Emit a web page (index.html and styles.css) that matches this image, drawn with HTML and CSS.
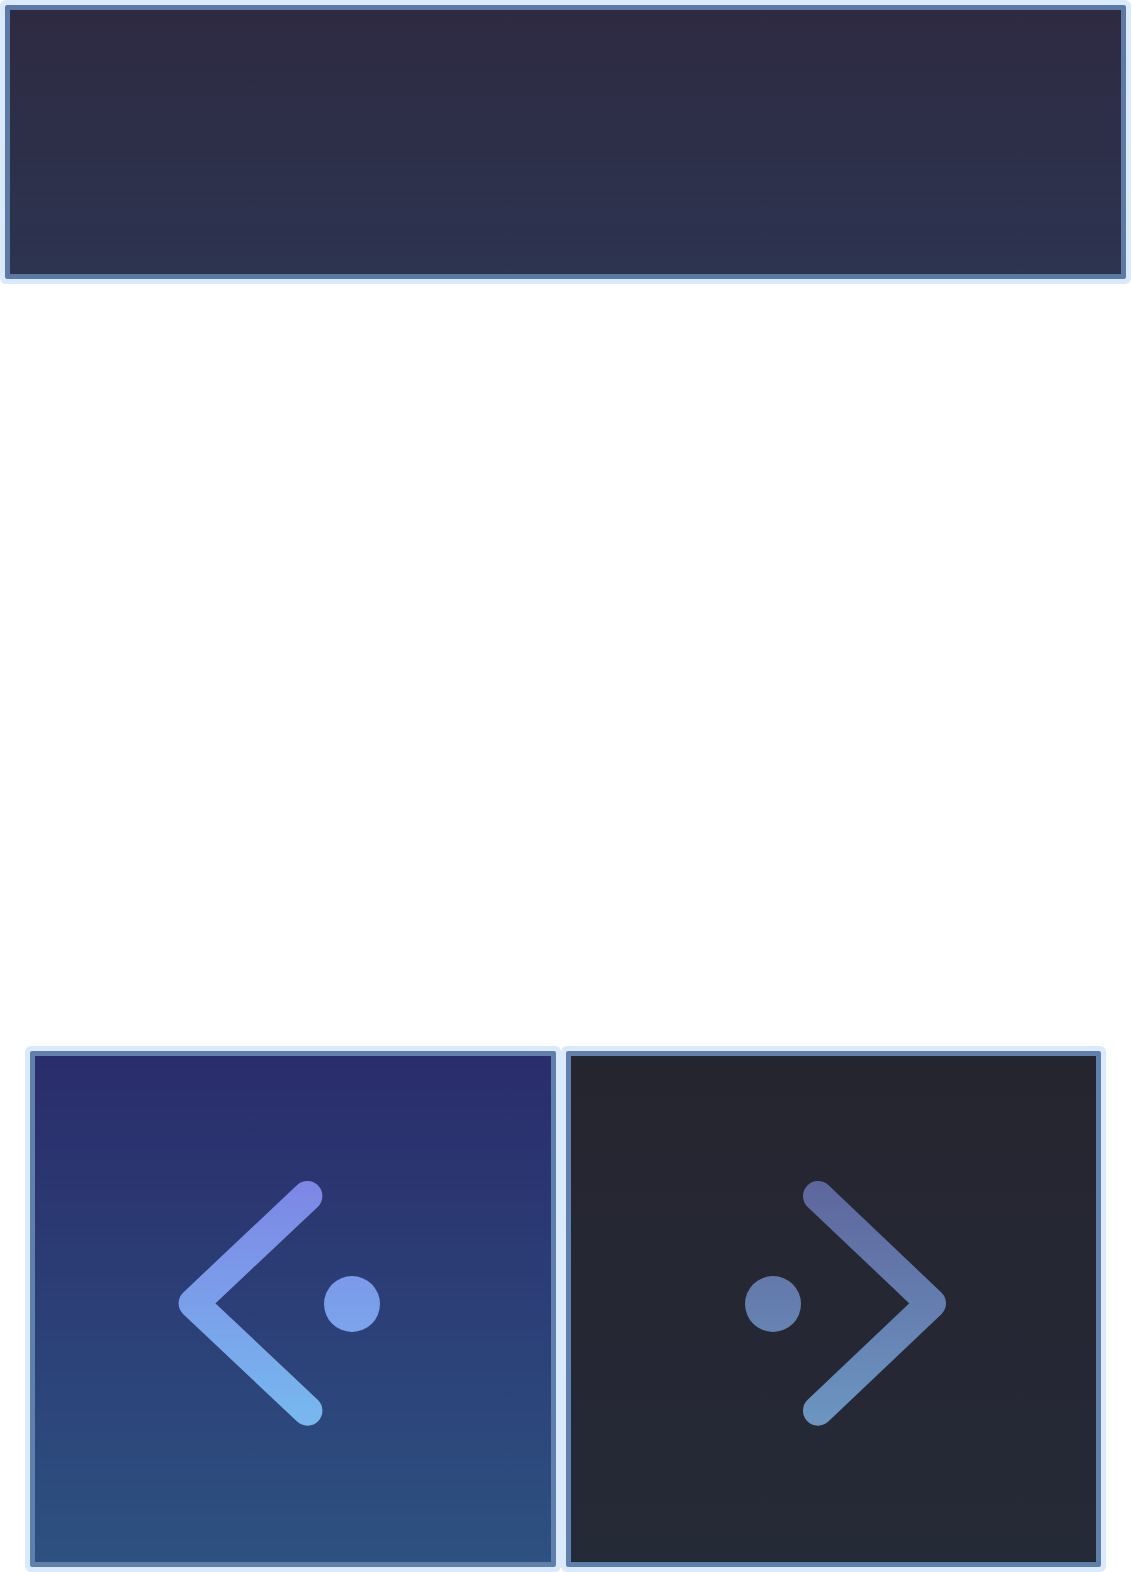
FILE: index.html
```html
<!DOCTYPE html>
<html lang="en">
<head>
<meta charset="utf-8">
<title>Carousel</title>
<link rel="stylesheet" href="styles.css">
</head>
<body>
<div class="page">
  <header class="banner"></header>
  <div class="nav-pair">
    <button class="nav-btn nav-prev" aria-label="Previous">
      <svg class="nav-icon" viewBox="0 0 516 506" aria-hidden="true">
        <defs>
          <linearGradient id="gPrev" gradientUnits="userSpaceOnUse" x1="0" y1="124" x2="0" y2="370">
            <stop offset="0" stop-color="#7d86e5"/>
            <stop offset="1" stop-color="#77b9ef"/>
          </linearGradient>
        </defs>
        <g fill="none" stroke="url(#gPrev)" stroke-width="30" stroke-linecap="round" stroke-linejoin="round">
          <polyline points="272.4,140 158.6,247.3 272.4,354.7"/>
        </g>
        <circle cx="317" cy="248" r="28" fill="url(#gPrev)"/>
      </svg>
    </button>
    <button class="nav-btn nav-next" aria-label="Next">
      <svg class="nav-icon" viewBox="0 0 525 506" aria-hidden="true">
        <defs>
          <linearGradient id="gNext" gradientUnits="userSpaceOnUse" x1="0" y1="124" x2="0" y2="370">
            <stop offset="0" stop-color="#5d669c"/>
            <stop offset="1" stop-color="#6c96c1"/>
          </linearGradient>
        </defs>
        <g fill="none" stroke="url(#gNext)" stroke-width="30" stroke-linecap="round" stroke-linejoin="round">
          <polyline points="247,140 360,247.3 247,354.7"/>
        </g>
        <circle cx="202" cy="248" r="28" fill="url(#gNext)"/>
      </svg>
    </button>
  </div>
</div>
</body>
</html>
```
FILE: styles.css
```css
* {
  box-sizing: border-box;
}

html, body {
  margin: 0;
  padding: 0;
  background: #ffffff;
  font-family: "Liberation Sans", Arial, sans-serif;
}

.page {
  padding: 5px 6px 5px 5px;
}

.banner {
  display: block;
  height: 274px;
  border: 5px solid #5c7aa5;
  border-radius: 2px;
  box-shadow: 0 0 0 5px #dbe9fc;
  background: linear-gradient(180deg, #2e2a42 0%, #2c3450 100%);
}

.nav-pair {
  margin: 772px 25px 0 25px;
  display: grid;
  grid-template-columns: 526fr 535fr;
  gap: 10px;
}

.nav-btn {
  display: block;
  height: 516px;
  padding: 0;
  margin: 0;
  border: 5px solid #5f7fad;
  border-radius: 2px;
  box-shadow: 0 0 0 5px #dbe9fc;
  cursor: pointer;
}

.nav-prev {
  background: linear-gradient(180deg, #2a2d6b 0%, #2d5181 100%);
}

.nav-next {
  background: linear-gradient(180deg, #25252f 0%, #252a37 100%);
}

.nav-icon {
  display: block;
  width: 100%;
  height: 100%;
}
```
